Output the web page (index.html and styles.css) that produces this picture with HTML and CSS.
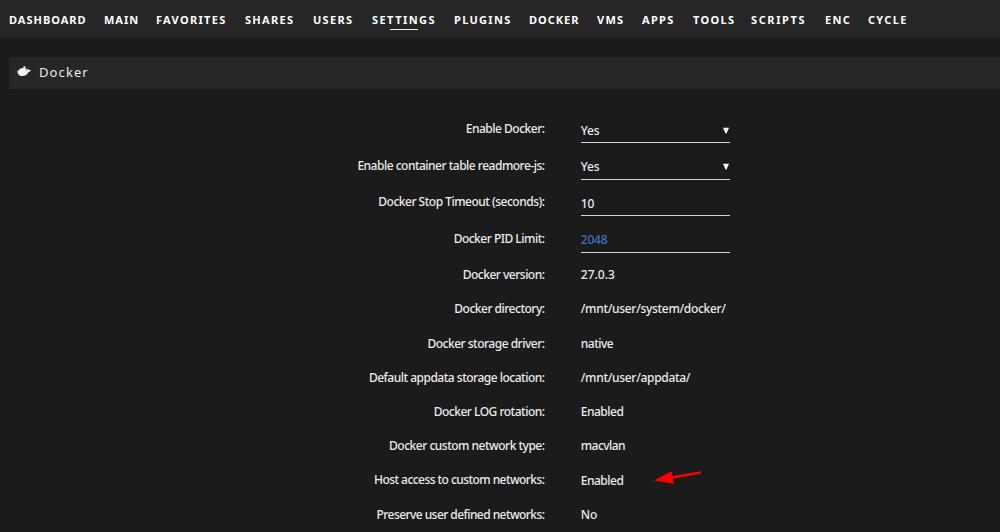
FILE: index.html
```html
<!DOCTYPE html>
<html lang="en">
<head>
<meta charset="utf-8">
<title>Docker Settings</title>
<link rel="stylesheet" href="styles.css">
</head>
<body>
<nav class="menu">
<a class="tight">DASHBOARD</a><a class="tight">MAIN</a><a>FAVORITES</a><a>SHARES</a><a>USERS</a><a class="active">SETTINGS</a><a>PLUGINS</a><a class="tight">DOCKER</a><a>VMS</a><a>APPS</a><a>TOOLS</a><a class="wide">SCRIPTS</a><a>ENC</a><a>CYCLE</a>
</nav>
<main>
<h1 class="title">
<svg class="whale" viewBox="0 0 14 11"><path d="M.5 4.500h1.700V2.700h2.200V1.900h2V.3h1.900v2.300h1.200v1.700c.7 0 1.100-.3 1-1.200l.2-.7c.8.4 1.200 1 1.200 1.600.7-.1 1.400 0 1.900.4-.4 1-1.200 1.400-2.200 1.400C10.300 8.900 8.400 10 5.500 10 2 10 .1 8 .5 4.500Z"/></svg>
<span>Docker</span>
</h1>
<dl class="form">
<div class="row field"><dt>Enable Docker:</dt><dd><div class="input"><span>Yes</span><svg class="caret" viewBox="0 0 6 6"><path d="M0 .3h6L3.500 6h-1z"/></svg></div></dd></div>
<div class="row field"><dt>Enable container table readmore-js:</dt><dd><div class="input"><span>Yes</span><svg class="caret" viewBox="0 0 6 6"><path d="M0 .3h6L3.500 6h-1z"/></svg></div></dd></div>
<div class="row field"><dt>Docker Stop Timeout (seconds):</dt><dd><div class="input number">10</div></dd></div>
<div class="row field"><dt>Docker PID Limit:</dt><dd><div class="input number placeholder">2048</div></dd></div>
<div class="row"><dt>Docker version:</dt><dd class="number">27.0.3</dd></div>
<div class="row"><dt>Docker directory:</dt><dd class="path">/mnt/user/system/docker/</dd></div>
<div class="row"><dt>Docker storage driver:</dt><dd>native</dd></div>
<div class="row"><dt>Default appdata storage location:</dt><dd class="path">/mnt/user/appdata/</dd></div>
<div class="row"><dt>Docker LOG rotation:</dt><dd>Enabled</dd></div>
<div class="row"><dt>Docker custom network type:</dt><dd class="snug">macvlan</dd></div>
<div class="row"><dt class="snug">Host access to custom networks:</dt><dd>Enabled<svg class="arrow" viewBox="0 0 50 16"><path d="M0 9.500 17.500.300 18.200 5.200 47 .300v2.500L18.900 7.700 19.700 12.700z"/></svg></dd></div>
<div class="row"><dt class="snug">Preserve user defined networks:</dt><dd class="number">No</dd></div>
</dl>
</main>
</body>
</html>
```
FILE: styles.css
```css
* { box-sizing: border-box; }
body {
  margin: 0;
  height: 532px;
  overflow: hidden;
  background: #1b1b1b;
  color: #ececec;
  font: 500 12px/18px "Noto Sans", "Open Sans", sans-serif;
  letter-spacing: -0.5px;
}
.menu {
  display: grid;
  grid-template-columns: 95px 52px 89px 68px 59px 82px 75px 68px 45px 51px 58px 74px 43px 60px;
  height: 38px;
  padding: 11px 0 0 9px;
  background: #262626;
  color: #fff;
  font-size: 11px;
  font-weight: 700;
  letter-spacing: 1.3px;
  white-space: nowrap;
}
.tight { letter-spacing: 1px; }
.wide { letter-spacing: 1.600px; }
.active { position: relative; letter-spacing: 1.450px; }
.active::after {
  content: "";
  position: absolute;
  left: 18px;
  top: 17.500px;
  width: 28px;
  height: 1.500px;
  background: #f2f2f2;
}
.title {
  display: flex;
  align-items: center;
  gap: 8px;
  height: 32px;
  margin: 19px 0 0 9px;
  padding: 0 0 3px 8px;
  background: #262626;
  font-size: 13px;
  font-weight: 400;
  letter-spacing: 1.100px;
}
.whale { width: 14px; height: 11px; fill: #f2f2f2; }
.form { margin: 22px 0 0; }
.row {
  display: grid;
  grid-template-columns: 544.500px 1fr;
  column-gap: 36.300px;
  height: 34.200px;
  align-items: start;
  padding-top: 9.300px;
  white-space: nowrap;
}
.field { height: 36.500px; padding-top: 8px; }
.field dt { padding-top: 1.300px; }
dt { text-align: right; }
dd { margin: 0; display: flex; align-items: center; }
.number { letter-spacing: 0; }
.path { letter-spacing: -0.300px; }
.snug { letter-spacing: -0.560px; }
.input {
  display: flex;
  align-items: center;
  justify-content: space-between;
  width: 149.500px;
  height: 24px;
  border-bottom: 1px solid #d6d6d6;
  letter-spacing: -0.200px;
}
.placeholder { color: #486dba; }
.caret { width: 6px; height: 7px; margin: 0 1px 1px 0; fill: #fff; }
.arrow { width: 50px; height: 16px; margin: 0 0 3px 31px; fill: #f00; }
```
